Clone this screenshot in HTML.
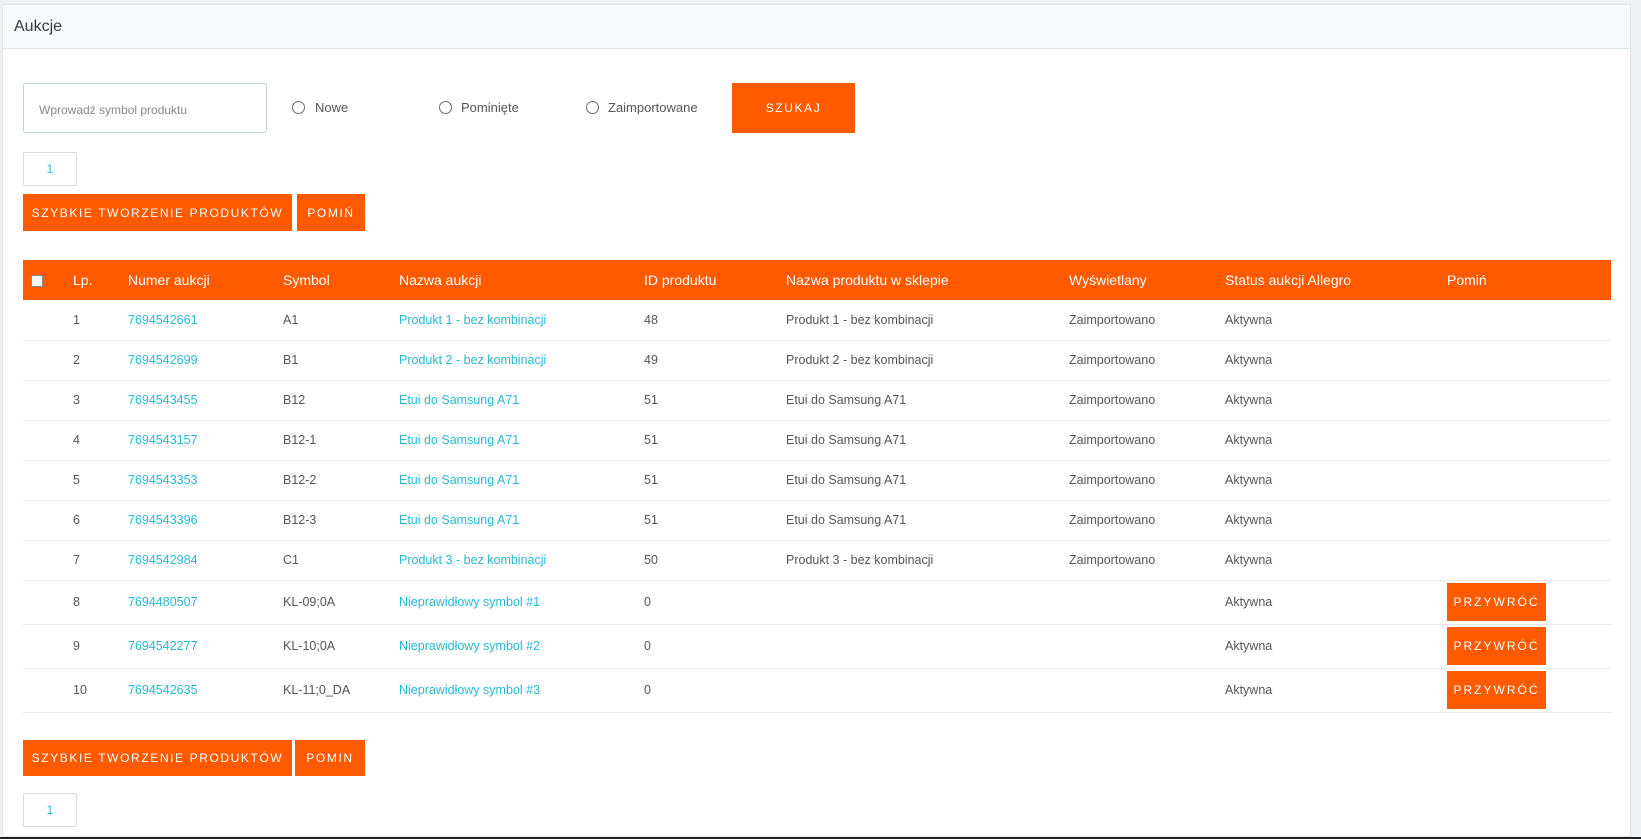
<!DOCTYPE html>
<html><head><meta charset="utf-8"><style>
*{box-sizing:border-box;margin:0;padding:0}
body{width:1641px;height:839px;background:#eef0f2;font-family:"Liberation Sans",Arial,sans-serif;color:#555;position:relative;overflow:hidden}
.card{position:absolute;left:2px;top:4px;width:1629px;height:833px;background:#fff;border:1px solid #dfe4e8}
.hd{position:absolute;left:0;top:0;right:0;height:44px;background:#f7f9fb;border-bottom:1px solid #dbe6e9}
.hd span{position:absolute;left:11px;top:13px;font-size:16px;color:#363a41}
.ab{position:absolute}
.btn{position:absolute;background:#ff5a00;color:#fff;font-size:12px;letter-spacing:1.6px;display:flex;align-items:center;justify-content:center}
.inp{left:23px;top:83px;width:244px;height:50px;border:1px solid #bbcdd2;border-radius:3px;font-size:12px;color:#888;padding:19px 15px}
.rad{position:absolute;top:101px;width:13px;height:13px;border:1px solid #6c6c6c;border-radius:50%}
.rl{position:absolute;top:100px;font-size:13px;color:#555}
.pg{position:absolute;left:23px;width:54px;height:34px;border:1px solid #d6dadd;border-radius:2px;color:#25b9d7;font-size:12px;text-align:center;line-height:32px}
table{position:absolute;left:23px;top:260px;width:1588px;border-collapse:collapse;font-size:12.5px}
th{background:#ff5a00;color:#fff;font-weight:normal;height:40px;text-align:left;font-size:14px;padding:0}
td{height:40px;border-bottom:1px solid #e6e8e9;padding:0}
tr.t td{height:44px}
a{color:#25b9d7;text-decoration:none}
.c1{width:50px}.c2{width:55px}.c3{width:155px}.c4{width:116px}.c5{width:245px}.c6{width:142px}.c7{width:283px}.c8{width:156px}.c9{width:222px}
.pb{display:inline-flex;background:#ff5a00;color:#fff;width:99px;height:38px;align-items:center;justify-content:center;letter-spacing:2px;font-size:12px}
.cb{display:inline-block;width:12px;height:12px;background:#fff;border:1px solid #888;margin-left:8px;vertical-align:middle}
</style></head><body>
<div class="card">
<div class="hd"><span>Aukcje</span></div>
</div>
<div class="ab inp">Wprowadź symbol produktu</div>
<div class="rad" style="left:292px"></div><div class="rl" style="left:315px">Nowe</div>
<div class="rad" style="left:439px"></div><div class="rl" style="left:461px">Pominięte</div>
<div class="rad" style="left:586px"></div><div class="rl" style="left:608px">Zaimportowane</div>
<div class="btn" style="left:732px;top:83px;width:123px;height:50px">SZUKAJ</div>
<div class="pg" style="top:152px">1</div>
<div class="btn" style="left:23px;top:194px;width:269px;height:37px">SZYBKIE TWORZENIE PRODUKTÓW</div>
<div class="btn" style="left:297px;top:194px;width:68px;height:37px">POMIŃ</div>
<table>
<tr><th class="c1"><span class="cb"></span></th><th class="c2">Lp.</th><th class="c3">Numer aukcji</th><th class="c4">Symbol</th><th class="c5">Nazwa aukcji</th><th class="c6">ID produktu</th><th class="c7">Nazwa produktu w sklepie</th><th class="c8">Wyświetlany</th><th class="c9">Status aukcji Allegro</th><th>Pomiń</th></tr>
<tr><td></td><td>1</td><td><a>7694542661</a></td><td>A1</td><td><a>Produkt 1 - bez kombinacji</a></td><td>48</td><td>Produkt 1 - bez kombinacji</td><td>Zaimportowano</td><td>Aktywna</td><td></td></tr>
<tr><td></td><td>2</td><td><a>7694542699</a></td><td>B1</td><td><a>Produkt 2 - bez kombinacji</a></td><td>49</td><td>Produkt 2 - bez kombinacji</td><td>Zaimportowano</td><td>Aktywna</td><td></td></tr>
<tr><td></td><td>3</td><td><a>7694543455</a></td><td>B12</td><td><a>Etui do Samsung A71</a></td><td>51</td><td>Etui do Samsung A71</td><td>Zaimportowano</td><td>Aktywna</td><td></td></tr>
<tr><td></td><td>4</td><td><a>7694543157</a></td><td>B12-1</td><td><a>Etui do Samsung A71</a></td><td>51</td><td>Etui do Samsung A71</td><td>Zaimportowano</td><td>Aktywna</td><td></td></tr>
<tr><td></td><td>5</td><td><a>7694543353</a></td><td>B12-2</td><td><a>Etui do Samsung A71</a></td><td>51</td><td>Etui do Samsung A71</td><td>Zaimportowano</td><td>Aktywna</td><td></td></tr>
<tr><td></td><td>6</td><td><a>7694543396</a></td><td>B12-3</td><td><a>Etui do Samsung A71</a></td><td>51</td><td>Etui do Samsung A71</td><td>Zaimportowano</td><td>Aktywna</td><td></td></tr>
<tr><td></td><td>7</td><td><a>7694542984</a></td><td>C1</td><td><a>Produkt 3 - bez kombinacji</a></td><td>50</td><td>Produkt 3 - bez kombinacji</td><td>Zaimportowano</td><td>Aktywna</td><td></td></tr>
<tr class="t"><td></td><td>8</td><td><a>7694480507</a></td><td>KL-09;0A</td><td><a>Nieprawidłowy symbol #1</a></td><td>0</td><td></td><td></td><td>Aktywna</td><td><span class="pb">PRZYWRÓĆ</span></td></tr>
<tr class="t"><td></td><td>9</td><td><a>7694542277</a></td><td>KL-10;0A</td><td><a>Nieprawidłowy symbol #2</a></td><td>0</td><td></td><td></td><td>Aktywna</td><td><span class="pb">PRZYWRÓĆ</span></td></tr>
<tr class="t"><td></td><td>10</td><td><a>7694542635</a></td><td>KL-11;0_DA</td><td><a>Nieprawidłowy symbol #3</a></td><td>0</td><td></td><td></td><td>Aktywna</td><td><span class="pb">PRZYWRÓĆ</span></td></tr>
</table>
<div class="btn" style="left:23px;top:740px;width:269px;height:36px">SZYBKIE TWORZENIE PRODUKTÓW</div>
<div class="btn" style="left:295px;top:740px;width:70px;height:36px">POMIN</div>
<div class="pg" style="top:793px">1</div>
<div class="ab" style="left:0;top:837px;width:1641px;height:2px;background:#222"></div>
</body></html>
